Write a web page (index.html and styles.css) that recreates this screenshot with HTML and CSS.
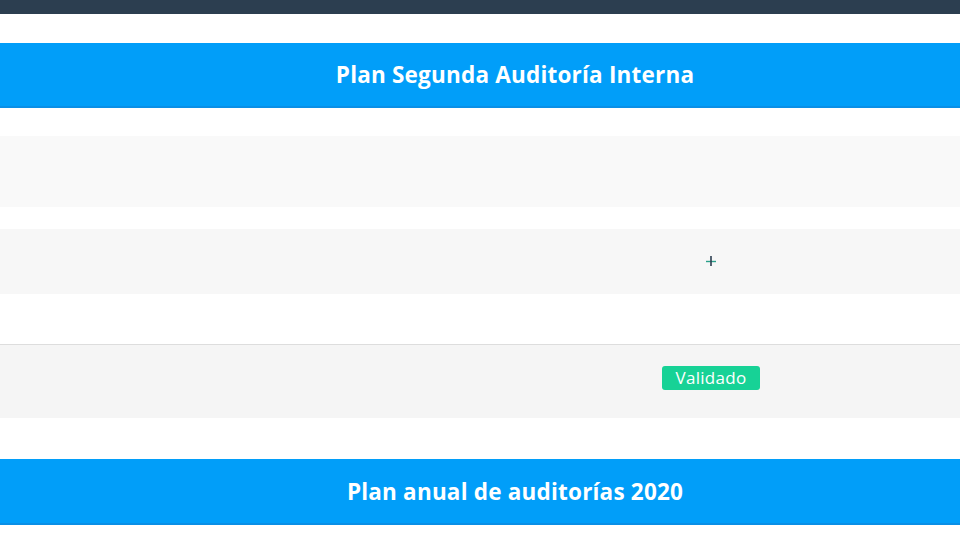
FILE: index.html
```html
<!DOCTYPE html>
<html lang="es">
<head>
<meta charset="utf-8">
<link rel="stylesheet" href="styles.css">
</head>
<body>
<div class="topbar"></div>
<div class="section-title first"><h2>Plan Segunda Auditoría Interna</h2></div>
<div class="row row-a"></div>
<div class="row row-b">
  <div class="cell-icon">
    <svg width="12" height="12" viewBox="0 0 12 12" aria-hidden="true">
      <path d="M1 6.5H11" stroke="#2aa08a" stroke-width="1.4"/>
      <path d="M6 1V11" stroke="#2c3e50" stroke-width="1.6"/>
    </svg>
  </div>
</div>
<div class="row row-c">
  <div class="cell-icon"><span class="badge">Validado</span></div>
</div>
<div class="section-title second"><h2>Plan anual de auditorías 2020</h2></div>
</body>
</html>
```
FILE: styles.css
```css
html, body {
  margin: 0;
  padding: 0;
  background: #ffffff;
  font-family: "Open Sans", "DejaVu Sans", sans-serif;
  width: 960px;
  height: 540px;
  overflow: hidden;
}
.topbar {
  height: 14px;
  background: #2c3e50;
}
.section-title {
  background: #019ef9;
  border-bottom: 2px solid #0a8fe6;
  display: flex;
  align-items: center;
  justify-content: center;
  box-sizing: border-box;
  padding-left: 70px;
}
.section-title.first { margin-top: 29px; height: 65px; }
.section-title.second { margin-top: 41px; height: 66px; }
.section-title h2 {
  margin: 0;
  color: #ffffff;
  font-weight: 700;
  font-size: 22.5px;
  letter-spacing: 0.2px;
}
.row {
  display: flex;
  align-items: center;
}
.row-a {
  margin-top: 28px;
  height: 71px;
  background: #f9f9f9;
}
.row-b {
  margin-top: 22px;
  height: 65px;
  background: #f7f7f7;
}
.row-c {
  margin-top: 50px;
  height: 73px;
  background: #f5f5f5;
  border-top: 1px solid #dddddd;
  align-items: flex-start;
}
.cell-icon {
  margin-left: 661px;
  width: 100px;
  display: flex;
  justify-content: center;
}
.row-b .cell-icon svg { display: block; margin-top: -1px; }
.row-c .cell-icon { padding-top: 21px; }
.badge {
  display: inline-block;
  width: 98px;
  height: 24px;
  line-height: 24px;
  text-align: center;
  background: #17d296;
  color: #ffffff;
  border-radius: 3px;
  font-size: 17px;
  font-weight: 400;
  letter-spacing: 0.3px;
}
```
